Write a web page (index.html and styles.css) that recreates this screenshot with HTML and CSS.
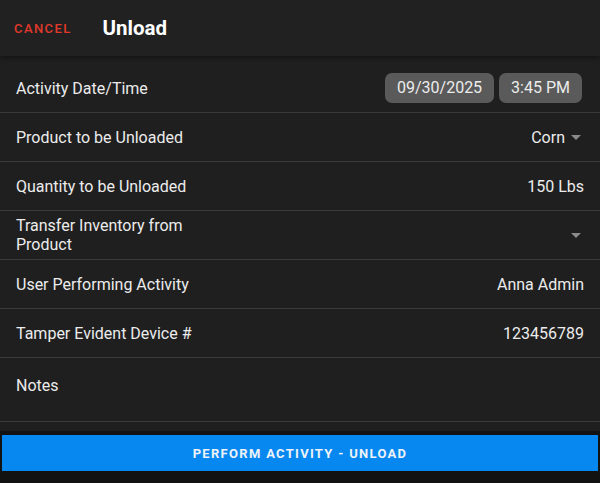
FILE: index.html
```html
<!DOCTYPE html>
<html lang="en">
<head>
    <meta charset="UTF-8">
    <meta name="viewport" content="width=device-width, initial-scale=1.0">
    <title>Unload</title>
    <link rel="stylesheet" href="styles.css">
</head>
<body>
    <div class="screen">
        <header class="topbar">
            <button class="cancel">Cancel</button>
            <h1>Unload</h1>
        </header>

        <div class="list">
            <div class="row">
                <span class="label">Activity Date/Time</span>
                <div class="pills">
                    <span class="pill">09/30/2025</span>
                    <span class="pill">3:45 PM</span>
                </div>
            </div>
            <div class="row">
                <span class="label">Product to be Unloaded</span>
                <span class="value">Corn <span class="caret"></span></span>
            </div>
            <div class="row">
                <span class="label">Quantity to be Unloaded</span>
                <span class="value">150 Lbs</span>
            </div>
            <div class="row">
                <span class="label narrow">Transfer Inventory from Product</span>
                <span class="value"><span class="caret"></span></span>
            </div>
            <div class="row">
                <span class="label">User Performing Activity</span>
                <span class="value">Anna Admin</span>
            </div>
            <div class="row">
                <span class="label">Tamper Evident Device #</span>
                <span class="value">123456789</span>
            </div>
            <div class="row notes">
                <span class="label">Notes</span>
            </div>
        </div>

        <footer class="footer">
            <button class="perform">Perform Activity - Unload</button>
        </footer>
    </div>
</body>
</html>
```

FILE: styles.css
```css
:root {
    --bg: #1f1f1f;
    --bg-dark: #121212;
    --divider: #3a3a3a;
    --text: #ececec;
    --pill: #5a5a5a;
    --danger: #e0392b;
    --primary: #0788f0;
}

* {
    box-sizing: border-box;
}

html, body {
    margin: 0;
    height: 100%;
}

body {
    font-family: Roboto, "Liberation Sans", sans-serif;
    background-color: var(--bg-dark);
    color: var(--text);
}

.screen {
    height: 483px;
    display: flex;
    flex-direction: column;
    background: var(--bg);
}

.topbar {
    height: 56px;
    display: flex;
    align-items: center;
    padding: 0 14px;
    background: #212121;
    box-shadow: 0 2px 4px rgba(0,0,0,0.35);
    position: relative;
    z-index: 1;
}

.topbar h1 {
    margin: 0 0 0 31px;
    font-size: 20.5px;
    font-weight: 700;
    color: #fff;
}

.cancel {
    background: none;
    border: none;
    padding: 0;
    color: var(--danger);
    font-family: inherit;
    font-size: 13px;
    font-weight: 500;
    letter-spacing: 1.4px;
    text-transform: uppercase;
    cursor: pointer;
}

.list {
    margin-top: 8px;
    flex: 1;
}

.row {
    height: 49px;
    display: flex;
    align-items: center;
    justify-content: space-between;
    padding: 0 16px;
    border-bottom: 1px solid var(--divider);
    font-size: 16px;
}

.label.narrow {
    width: 200px;
    line-height: 19px;
}

.value {
    display: flex;
    align-items: center;
    gap: 6px;
}

.caret {
    width: 0;
    height: 0;
    border-left: 5px solid transparent;
    border-right: 5px solid transparent;
    border-top: 5px solid #8a8a8a;
    margin-right: 3px;
}

.pills {
    display: flex;
    gap: 5px;
    margin-right: 2px;
}

.pill {
    background: var(--pill);
    border-radius: 7px;
    padding: 0 12px;
    height: 30px;
    line-height: 30px;
    font-size: 16px;
}

.row.notes {
    height: 64px;
    align-items: flex-start;
    padding-top: 18px;
}

.footer {
    margin-top: 9px;
    background: var(--bg-dark);
    padding: 4px 2px 12px;
}

.perform {
    width: 100%;
    height: 36px;
    background: var(--primary);
    border: none;
    color: #eef3f8;
    font-family: inherit;
    font-size: 13px;
    font-weight: 700;
    letter-spacing: 1.3px;
    text-transform: uppercase;
    cursor: pointer;
}
```
